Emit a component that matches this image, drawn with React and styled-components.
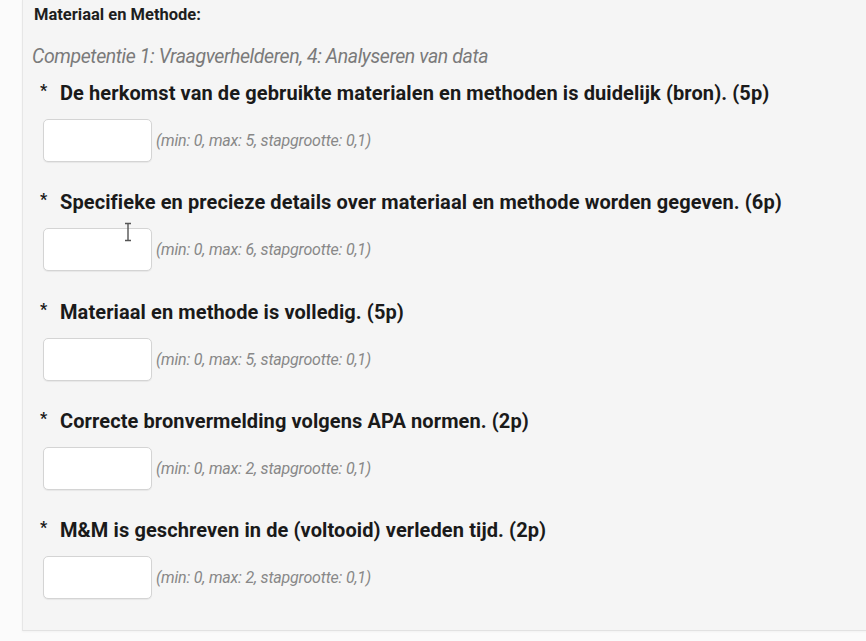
import React from "react";
import styled, { createGlobalStyle } from "styled-components";

const Global = createGlobalStyle`
  html, body { margin: 0; padding: 0; background: #fbfbfb; overflow: hidden; }
  body { font-family: Roboto, "Noto Sans", "Liberation Sans", sans-serif; }
  * { box-sizing: border-box; }
`;

const Page = styled.div`
  width: 866px;
  height: 641px;
  padding-left: 22px;
  position: relative;
`;

const Panel = styled.section`
  width: 860px;
  background: #f5f5f5;
  border-left: 1px solid #e6e6e6;
  border-bottom: 1px solid #e2e2e2;
  padding: 4px 0 31px 11px;
  box-shadow: 0 1px 2px rgba(0, 0, 0, 0.04);
`;

const Title = styled.h3`
  margin: 0;
  font-size: 16.5px;
  line-height: 22px;
  font-weight: 700;
  color: #1e1e1e;
`;

const Competence = styled.p`
  margin: 20px 0 0 -2px;
  font-size: 19.5px;
  line-height: 22px;
  font-style: italic;
  font-weight: 400;
  color: #7a7a7a;
  letter-spacing: -0.4px;
`;

const Criteria = styled.div`
  display: flex;
  flex-direction: column;
  gap: 29.25px;
  margin-top: 14px;
  padding-left: 5px;
`;

const Criterion = styled.div`
  display: flex;
  flex-direction: column;
`;

const Label = styled.label`
  display: flex;
  align-items: flex-start;
  font-size: 20px;
  line-height: 22px;
  font-weight: 700;
  color: #1a1a1a;
  letter-spacing: 0.1px;
  margin-bottom: 15px;
`;

const Star = styled.span`
  flex: none;
  width: 21px;
  font-size: 16px;
  line-height: 18px;
  padding-left: 1px;
`;

const Row = styled.div`
  display: flex;
  align-items: center;
  gap: 4px;
  padding-left: 4px;
`;

const ScoreInput = styled.input`
  width: 109px;
  height: 43px;
  background: #fff;
  border: 1.5px solid #d4d4d4;
  border-radius: 5px;
  box-shadow: 0 1px 1px rgba(0, 0, 0, 0.06);
  outline: none;
  padding: 0 8px;
  font: inherit;
`;

const Hint = styled.span`
  font-size: 16px;
  font-style: italic;
  color: #888;
  letter-spacing: -0.2px;
`;

const Cursor = styled.svg`
  position: absolute;
  left: 123px;
  top: 222px;
  pointer-events: none;
`;

const criteria = [
  { text: "De herkomst van de gebruikte materialen en methoden is duidelijk (bron). (5p)", max: 5 },
  { text: "Specifieke en precieze details over materiaal en methode worden gegeven. (6p)", max: 6 },
  { text: "Materiaal en methode is volledig. (5p)", max: 5 },
  { text: "Correcte bronvermelding volgens APA normen. (2p)", max: 2 },
  { text: "M&M is geschreven in de (voltooid) verleden tijd. (2p)", max: 2 },
];

export default function App() {
  return (
    <>
      <Global />
      <Page>
        <Panel>
          <Title>Materiaal en Methode:</Title>
          <Competence>Competentie 1: Vraagverhelderen, 4: Analyseren van data</Competence>
          <Criteria>
            {criteria.map((c, i) => (
              <Criterion key={i}>
                <Label>
                  <Star>*</Star>
                  <span>{c.text}</span>
                </Label>
                <Row>
                  <ScoreInput type="text" aria-label={c.text} />
                  <Hint>(min: 0, max: {c.max}, stapgrootte: 0,1)</Hint>
                </Row>
              </Criterion>
            ))}
          </Criteria>
        </Panel>
        <Cursor width="10" height="20" viewBox="0 0 10 20">
          <path d="M2 1.5h6M5 1.5v17M2 18.5h6" stroke="#555" strokeWidth="1.4" fill="none" />
        </Cursor>
      </Page>
    </>
  );
}
